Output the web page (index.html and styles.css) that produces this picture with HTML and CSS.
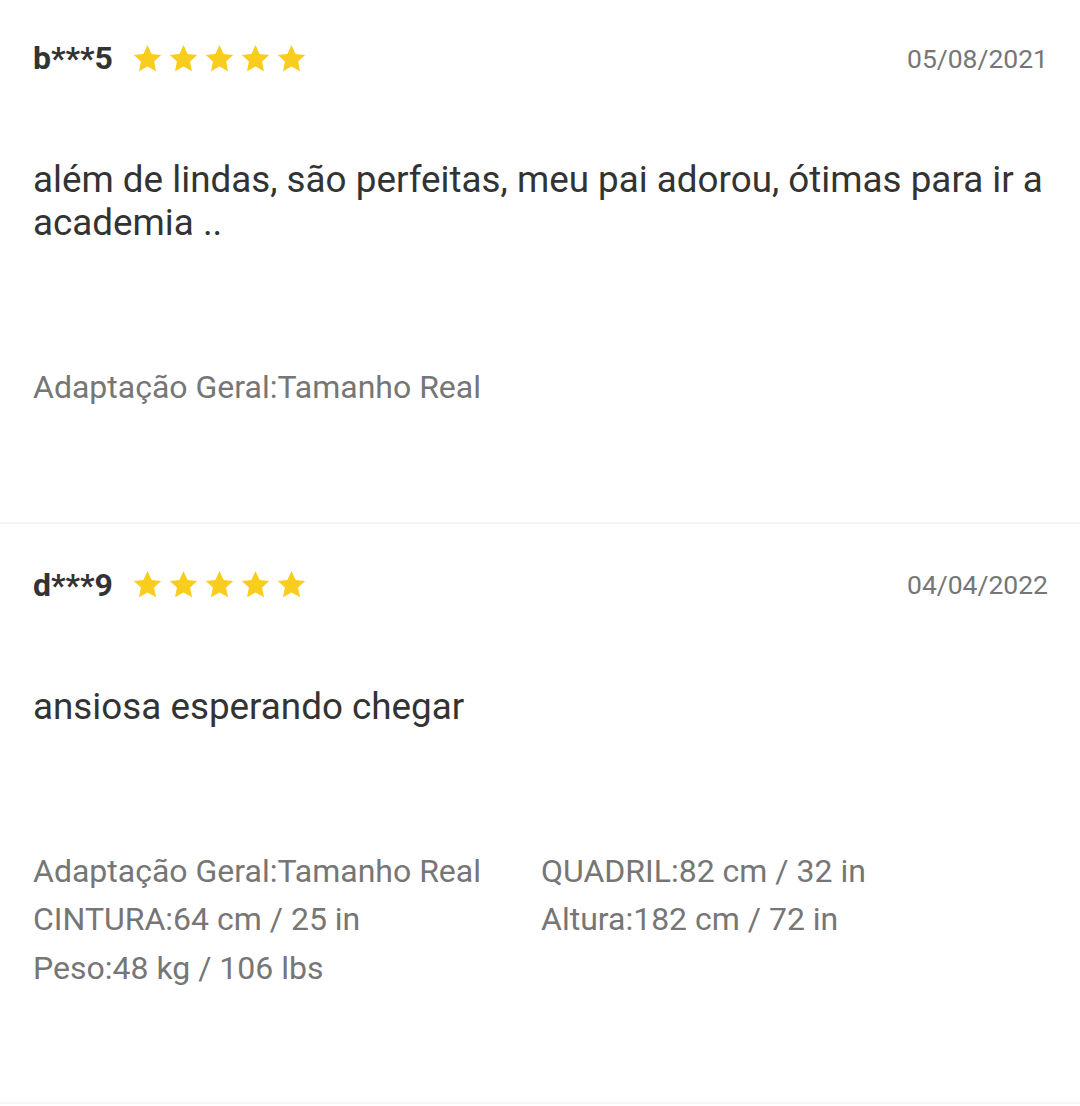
FILE: index.html
```html
<!DOCTYPE html>
<html lang="pt">
<head>
<meta charset="utf-8">
<link rel="stylesheet" href="styles.css">
</head>
<body>
<svg width="0" height="0" class="defs">
  <defs>
    <symbol id="star" viewBox="0 0 24 24">
      <path d="M12 1.6l3.2 6.9 7.4.8-5.5 5.1 1.5 7.4L12 18.1l-6.6 3.7 1.5-7.4-5.5-5.1 7.4-.8z"/>
    </symbol>
  </defs>
</svg>

<section class="review review-first">
  <div class="head">
    <div class="who">
      <span class="name">b***5</span>
      <span class="stars">
        <svg class="star"><use href="#star"/></svg>
        <svg class="star"><use href="#star"/></svg>
        <svg class="star"><use href="#star"/></svg>
        <svg class="star"><use href="#star"/></svg>
        <svg class="star"><use href="#star"/></svg>
      </span>
    </div>
    <span class="date">05/08/2021</span>
  </div>
  <p class="text">além de lindas, são perfeitas, meu pai adorou, ótimas para ir a academia ..</p>
  <div class="attrs">
    <span>Adaptação Geral:Tamanho Real</span>
  </div>
</section>

<section class="review">
  <div class="head">
    <div class="who">
      <span class="name">d***9</span>
      <span class="stars">
        <svg class="star"><use href="#star"/></svg>
        <svg class="star"><use href="#star"/></svg>
        <svg class="star"><use href="#star"/></svg>
        <svg class="star"><use href="#star"/></svg>
        <svg class="star"><use href="#star"/></svg>
      </span>
    </div>
    <span class="date">04/04/2022</span>
  </div>
  <p class="text">ansiosa esperando chegar</p>
  <div class="attrs">
    <span>Adaptação Geral:Tamanho Real</span>
    <span>QUADRIL:82 cm / 32 in</span>
    <span>CINTURA:64 cm / 25 in</span>
    <span>Altura:182 cm / 72 in</span>
    <span>Peso:48 kg / 106 lbs</span>
  </div>
</section>
</body>
</html>
```

FILE: styles.css
```css
* { box-sizing: border-box; }
html, body {
  margin: 0;
  padding: 0;
  background: #ffffff;
}
body {
  font-family: Roboto, "Liberation Sans", Arial, sans-serif;
  color: #333333;
  width: 1080px;
}
.defs { position: absolute; }

.review {
  padding: 41px 32px 110px 33px;
  border-bottom: 2px solid #f4f4f4;
}
.review-first { padding-top: 38px; }

.head {
  display: flex;
  align-items: center;
  justify-content: space-between;
  height: 40px;
}
.who {
  display: flex;
  align-items: center;
}
.name {
  font-weight: 700;
  font-size: 32px;
  color: #333333;
}
.stars {
  display: flex;
  gap: 5px;
  margin-left: 19px;
}
.star {
  width: 31px;
  height: 31px;
  fill: #f8cd1e;
}
.date {
  font-size: 26.5px;
  color: #767676;
}

.text {
  margin: 80px 0 0;
  font-size: 36.8px;
  line-height: 43px;
  color: #333333;
}

.attrs {
  margin-top: 119px;
  display: grid;
  grid-template-columns: 508px 1fr;
  font-size: 32px;
  line-height: 48.5px;
  color: #767676;
}
```
